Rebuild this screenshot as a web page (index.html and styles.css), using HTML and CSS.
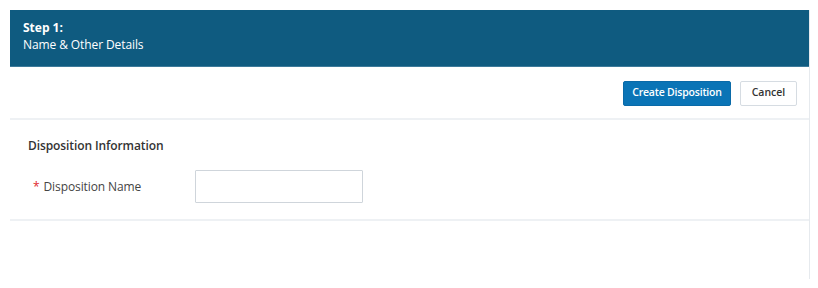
FILE: index.html
```html
<!DOCTYPE html>
<html>
<head>
<meta charset="utf-8">
<link rel="stylesheet" href="styles.css">
</head>
<body>
<div class="panel">
  <div class="step-header">
    <div class="step-num">Step 1:</div>
    <div class="step-title">Name &amp; Other Details</div>
  </div>
  <div class="toolbar">
    <button class="btn btn-primary">Create Disposition</button>
    <button class="btn btn-secondary">Cancel</button>
  </div>
  <div class="section">
    <div class="section-title">Disposition Information</div>
    <div class="field-row">
      <label class="field-label"><span class="req">*</span>Disposition Name</label>
      <input class="field-input" type="text">
    </div>
  </div>
</div>
</body>
</html>
```
FILE: styles.css
```css
html, body {
  margin: 0;
  padding: 0;
  background: #ffffff;
  font-family: "Open Sans", "Noto Sans", sans-serif;
}
.panel {
  margin: 10px 0 0 10px;
  width: 800px;
  height: 269px;
  border-right: 1px solid #e6eaee;
  box-sizing: border-box;
}
.step-header {
  height: 57px;
  background: #0f5b80;
  color: #ffffff;
  padding: 9px 13px 0;
  box-sizing: border-box;
  border-bottom: 1px solid #3d7a9a;
}
.step-num {
  font-weight: 700;
  font-size: 12px;
  line-height: 17px;
}
.step-title {
  font-size: 12px;
  line-height: 17px;
  letter-spacing: -0.1px;
}
.toolbar {
  height: 53px;
  display: flex;
  justify-content: flex-end;
  align-items: center;
  gap: 9px;
  padding: 2px 12px 0 0;
  box-sizing: border-box;
  border-bottom: 2px solid #eef1f4;
}
.btn {
  height: 25px;
  font-family: "Open Sans", "Noto Sans", sans-serif;
  font-size: 10.5px;
  font-weight: 600;
  border-radius: 2px;
  padding: 0 0 3px;
  white-space: nowrap;
  cursor: pointer;
}
.btn-primary {
  width: 108px;
  background: #0a74b6;
  color: #ffffff;
  border: 1px solid #0a6aa8;
  letter-spacing: -0.2px;
}
.btn-secondary {
  width: 57px;
  background: #ffffff;
  color: #333333;
  border: 1px solid #d6dce2;
}
.section {
  height: 101px;
  border-bottom: 2px solid #eef1f4;
  padding: 17px 0 0 18px;
  box-sizing: border-box;
}
.section-title {
  font-size: 12px;
  font-weight: 600;
  color: #333333;
  line-height: 17px;
  letter-spacing: -0.1px;
}
.field-row {
  display: flex;
  align-items: center;
  margin-top: 16px;
  padding-left: 5px;
}
.field-label {
  width: 162px;
  font-size: 12px;
  color: #444444;
  letter-spacing: -0.1px;
}
.req {
  color: #e0262b;
  margin-right: 4px;
}
.field-input {
  width: 168px;
  height: 33px;
  box-sizing: border-box;
  border: 1px solid #cfd5db;
  border-radius: 1px;
  margin: 0;
}
```
